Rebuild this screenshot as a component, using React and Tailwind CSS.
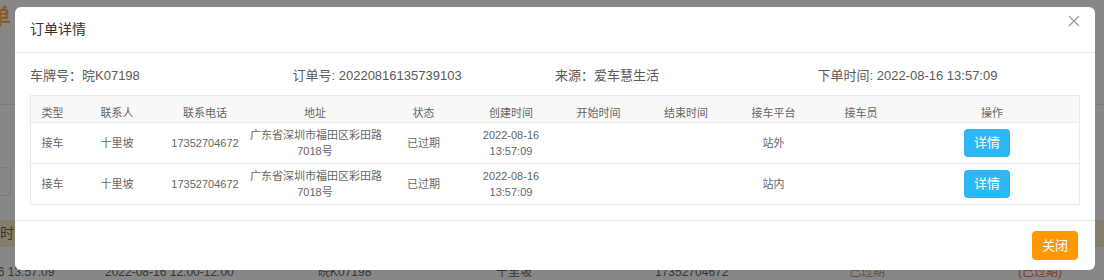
const orders = [
  { type: '接车', contact: '十里坡', phone: '17352704672', addr: ['广东省深圳市福田区彩田路', '7018号'], status: '已过期', created: ['2022-08-16', '13:57:09'], platform: '站外' },
  { type: '接车', contact: '十里坡', phone: '17352704672', addr: ['广东省深圳市福田区彩田路', '7018号'], status: '已过期', created: ['2022-08-16', '13:57:09'], platform: '站内' }
]

const headers = ['类型', '联系人', '联系电话', '地址', '状态', '创建时间', '开始时间', '结束时间', '接车平台', '接车员', '操作']

const gridCols = 'grid grid-cols-[43px_86px_90px_130px_87px_88px_87px_88px_87px_88px_1fr]'

function BackgroundPage() {
  return (
    <div className="flex h-[280px] flex-col bg-white text-[#333]">
      <div className="h-[34px] pt-[4px]">
        <span className="-ml-[33px] text-[22px] font-bold leading-[26px] text-[#ff9900]">订单</span>
      </div>
      <div className="h-[72px] border-b border-[#dcdee2]" />
      <div className="h-[62px]" />
      <div className="flex h-[29px]">
        <div className="-ml-[60px] h-[29px] w-[71px] rounded border border-[#dcdee2]" />
      </div>
      <div className="h-[25px]" />
      <div className="flex h-[27px] items-center bg-[#fbe6b8]">
        <span className="-ml-[28px] text-[14px]">下单时间</span>
      </div>
      <div className="h-[17px]" />
      <div className="flex whitespace-nowrap text-[12px] leading-[16px]">
        <span className="-ml-[57px] w-[162px]">2022-08-16 13:57:09</span>
        <span className="w-[213px]">2022-08-16 12:00-12:00</span>
        <span className="w-[178px]">晥K07198</span>
        <span className="w-[159px]">十里坡</span>
        <span className="w-[194px]">17352704672</span>
        <span className="w-[169px] text-[#b8741a]">已过期</span>
        <span className="text-[#ed4014]">(已过期)</span>
      </div>
    </div>
  )
}

function Btn({ color, children }) {
  return (
    <button className={`h-[28px] rounded-[4px] px-[10px] text-[13px] leading-[28px] text-white ${color}`}>
      {children}
    </button>
  )
}

export default function App() {
  return (
    <div className="relative h-[280px] w-[1104px] overflow-hidden font-[family-name:'Liberation_Sans','Noto_Sans_CJK_SC',sans-serif]">
      <BackgroundPage />

      {/* mask */}
      <div className="absolute inset-0 bg-[rgba(55,55,55,0.6)]" />

      {/* modal */}
      <div className="absolute left-[15px] top-[7px] w-[1080px] rounded-[6px] bg-white">
        <div className="border-b border-[#e8eaec] px-[15px] py-[14px]">
          <div className="text-[14px] leading-[17px] text-[#333]">订单详情</div>
        </div>
        <button className="absolute right-[15px] top-[8px] h-[12px] w-[12px]">
          <svg viewBox="0 0 12 12" className="h-[12px] w-[12px]" fill="none" stroke="#999" strokeWidth="1.2">
            <path d="M1 1L11 11M11 1L1 11" />
          </svg>
        </button>

        <div className="px-[15px] pb-[15px] pt-[14px]">
          <div className="grid grid-cols-4 text-[13px] leading-[18px] text-[#5a5a5a]">
            <div>车牌号：晥K07198</div>
            <div>订单号: 20220816135739103</div>
            <div>来源：爱车慧生活</div>
            <div>下单时间: 2022-08-16 13:57:09</div>
          </div>

          <div className="mt-[10px] border border-[#e8eaec] text-[11px] text-[#666]">
            <div className={`${gridCols} h-[26px] bg-[#f8f8f9] pt-[9px] leading-[16px]`}>
              {headers.map((h) => (
                <div key={h} className="text-center">{h}</div>
              ))}
            </div>
            {orders.map((o, i) => (
              <div key={i} className={`${gridCols} h-[41px] items-center border-t border-[#e8eaec] leading-[16px]`}>
                <div className="text-center">{o.type}</div>
                <div className="text-center">{o.contact}</div>
                <div className="text-center">{o.phone}</div>
                <div className="whitespace-nowrap text-center">
                  {o.addr.map((l) => (
                    <div key={l}>{l}</div>
                  ))}
                </div>
                <div className="text-center">{o.status}</div>
                <div className="text-center">
                  {o.created.map((l) => (
                    <div key={l}>{l}</div>
                  ))}
                </div>
                <div />
                <div />
                <div className="text-center">{o.platform}</div>
                <div />
                <div className="flex justify-center pr-[10px]">
                  <Btn color="bg-[#2db7f5]">详情</Btn>
                </div>
              </div>
            ))}
          </div>
        </div>

        <div className="flex justify-end border-t border-[#e8eaec] px-[17px] py-[10px]">
          <button className="h-[29px] rounded-[4px] bg-[#ff9900] px-[10px] text-[13px] leading-[29px] text-white">关闭</button>
        </div>
      </div>
    </div>
  )
}
